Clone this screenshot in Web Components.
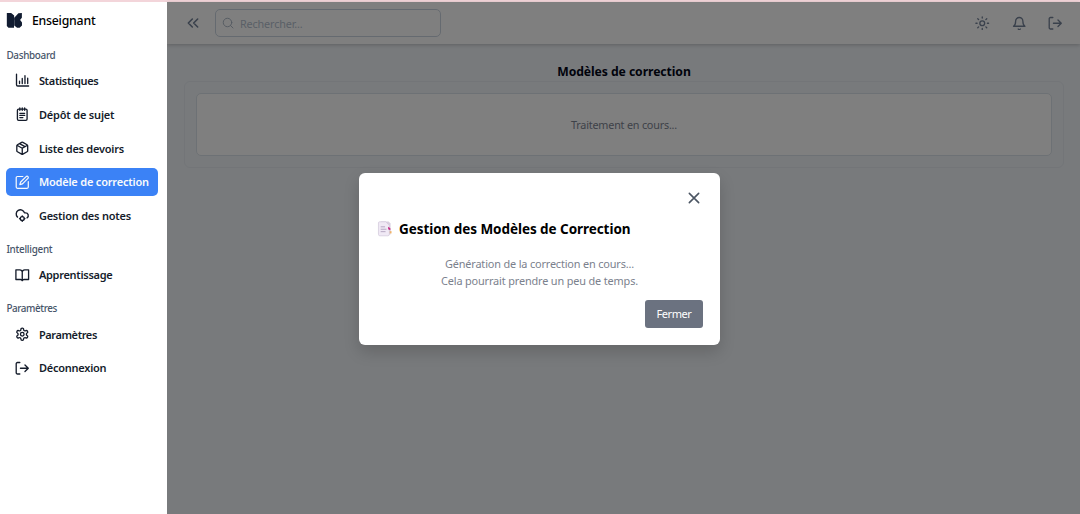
<!DOCTYPE html>
<html lang="fr">
<head>
<meta charset="utf-8">
<title>Enseignant</title>
<style>
html,body{margin:0;height:100%;overflow:hidden}
body{font-family:"Noto Sans","Open Sans",sans-serif;color:#0f172a}
</style>
</head>
<body>
<teacher-app></teacher-app>
<script>
const svg = (body, w = 1.8) => `<svg viewBox="0 0 24 24" fill="none" stroke="currentColor" stroke-width="${w}" stroke-linecap="round" stroke-linejoin="round">${body}</svg>`;
const ICONS = {
  chart: svg('<path d="M2.500 2v17.500a2 2 0 0 0 2 2h18M7.500 17.500v-4M12 17.500V9M16.500 17.500V4.500M21 17.500v-9"/>', 2.200),
  notes: svg('<rect x="4" y="3.500" width="16" height="18.500" rx="2"/><path d="M8 1.500v4M12 1.500v4M16 1.500v4M8 10.500h8M8 14h8M8 17.500h5"/>', 2.200),
  box: svg('<path d="M21 8a2 2 0 0 0-1-1.730l-7-4a2 2 0 0 0-2 0l-7 4A2 2 0 0 0 3 8v8a2 2 0 0 0 1 1.730l7 4a2 2 0 0 0 2 0l7-4A2 2 0 0 0 21 16ZM3.300 7 12 12l8.700-5M12 22V12M7.500 4.300l9 5.100"/>', 2.200),
  edit: svg('<path d="M13 2.500H4a2 2 0 0 0-2 2V20a2 2 0 0 0 2 2h16a2 2 0 0 0 2-2v-9M18.400 2.600a2.100 2.100 0 0 1 3 3L12.400 14.600 8 16l1.400-4.400Z"/>', 2),
  cloud: svg('<circle cx="12" cy="17.500" r="3.300"/><path d="M4.200 15.100A7 7 0 1 1 15.710 8h1.790a4.500 4.500 0 0 1 2.500 8.240M12 13v1M12 21v1M16.500 17.500h-1M8.500 17.500h-1"/>', 2.300),
  book: svg('<path d="M12 6.500a4 4 0 0 0-4-3.500H1.500v16H9a3 3 0 0 1 3 2 3 3 0 0 1 3-2h7.500V3H16a4 4 0 0 0-4 3.500ZM12 6.500V21"/>', 2.200),
  gear: svg('<path d="M12.220 2h-.44a2 2 0 0 0-2 2v.18a2 2 0 0 1-1 1.730l-.43.25a2 2 0 0 1-2 0l-.15-.08a2 2 0 0 0-2.730.73l-.22.38a2 2 0 0 0 .73 2.730l.15.1a2 2 0 0 1 1 1.720v.51a2 2 0 0 1-1 1.740l-.15.09a2 2 0 0 0-.73 2.730l.22.38a2 2 0 0 0 2.730.73l.15-.08a2 2 0 0 1 2 0l.43.25a2 2 0 0 1 1 1.730V20a2 2 0 0 0 2 2h.44a2 2 0 0 0 2-2v-.18a2 2 0 0 1 1-1.730l.43-.25a2 2 0 0 1 2 0l.15.08a2 2 0 0 0 2.730-.73l.22-.39a2 2 0 0 0-.73-2.730l-.15-.08a2 2 0 0 1-1-1.740v-.5a2 2 0 0 1 1-1.740l.15-.09a2 2 0 0 0 .73-2.730l-.22-.38a2 2 0 0 0-2.730-.73l-.15.08a2 2 0 0 1-2 0l-.43-.25a2 2 0 0 1-1-1.730V4a2 2 0 0 0-2-2z"/><circle cx="12" cy="12" r="3"/>', 2.200),
  exit: svg('<path d="M8 21.500H4a2 2 0 0 1-2-2v-15a2 2 0 0 1 2-2h4M9 12h13M16.500 6.500 22 12l-5.500 5.500"/>', 2.200),
  collapse: svg('<path d="m11 18-6-6 6-6M19 18l-6-6 6-6"/>', 2.400),
  search: svg('<circle cx="11" cy="11" r="8.500"/><path d="m22 22-5-5"/>', 1.800),
  sun: svg('<circle cx="12" cy="12" r="4"/><path d="M12 1.500v2M12 20.500v2M4.600 4.600 6 6M18 18l1.400 1.400M1.500 12h2M20.500 12h2M6 18l-1.400 1.400M19.400 4.600 18 6"/>', 2.200),
  bell: svg('<path d="M6 8.500a6 6 0 0 1 12 0c0 6.500 3.500 8.500 3.500 8.500h-19S6 15 6 8.500M10.300 21.500a2 2 0 0 0 3.400 0"/>', 2.200),
  close: svg('<path d="M4 4l16 16M20 4 4 20"/>', 2.700),
  logo: '<svg viewBox="0 0 16 16" fill="#111c31"><path d="M.8 1h4.200l2.900 2.500v4.500H.8ZM8 8V5.500L12 1.200 15.400 1v4.600l-2 2.400ZM.8 8.100h7v7.100H2.400L.8 13.600ZM8 8.100h6l1.500 2V13l-2.300 2.300h-2.500L8 13Z"/></svg>',
  pages: '<svg viewBox="0 0 16 16"><path d="M4 .5h8l2 2V14H4z" fill="#d8cfdf"/><path d="M1.500 2q0-1.200 1.200-1.200H9L12.800 4.500v9q0 1.800-1.500 1.800H3q-1.500 0-1.500-1.500z" fill="#f0e9f5" stroke="#cfc5d8" stroke-width=".7"/><path d="M3.800 6h4.500M3.800 8.500h6M3.800 11h5" stroke="#ae9fbb" stroke-width=".9"/><path d="M11.500 6 13.800 7.500v2L11.500 8.600z" fill="#c62882"/><path d="M13.200 10.500h1.800v2.300h-1.800z" fill="#f0b268"/></svg>'
};

function define(name, render, ready) {
  customElements.define(name, class extends HTMLElement {
    connectedCallback() {
      if (this.shadowRoot) return;
      this.attachShadow({ mode: 'open' }).innerHTML = render(this);
      if (ready) ready(this);
    }
  });
}

define('ui-icon', el => `<style>:host{display:block;flex:none;width:${el.getAttribute('size')}px;height:${el.getAttribute('size')}px}svg{display:block;width:100%;height:100%}</style>${ICONS[el.getAttribute('name')]}`);

/* One line of text whose tracking is adjusted to fill the given measure. */
define('ui-text', () => `<style>:host{display:block;flex:none;white-space:nowrap}span{display:inline-block}</style><span><slot></slot></span>`, el => {
  const span = el.shadowRoot.querySelector('span');
  const target = +el.getAttribute('measure');
  const count = el.textContent.length;
  const gap = (target - span.getBoundingClientRect().width) / count;
  el.style.letterSpacing = gap.toFixed(3) + 'px';
});

define('nav-item', el => `<style>
:host{display:flex;align-items:center;height:28px;box-sizing:border-box;padding-left:9px;gap:9px;border-radius:5px;font-size:11px;font-weight:600;color:#151c2b}
:host([active]){background:#3b82f6;color:#f8fafc}
</style><ui-icon name="${el.getAttribute('icon')}" size="14.500"></ui-icon><ui-text measure="${el.getAttribute('measure')}">${el.getAttribute('label')}</ui-text>`);

define('nav-group', el => `<style>
:host{display:flex;flex-direction:column;gap:5.750px}
ui-text{font-size:9.900px;line-height:14px;font-weight:500;color:#475569;margin-bottom:-1px}
</style><ui-text measure="${el.getAttribute('measure')}">${el.getAttribute('label')}</ui-text><slot></slot>`);

define('side-bar', () => `<style>
:host{display:flex;flex-direction:column;width:167px;box-sizing:border-box;padding:0 8.600px 0 6.400px;background:#fff;position:relative;z-index:1}
.brand{display:flex;align-items:center;height:37px;gap:9px;font-size:12.300px;font-weight:500;color:#000}
nav{display:flex;flex-direction:column;gap:12.500px;padding-top:8.800px}
</style>
<div class="brand"><ui-icon name="logo" size="16.500"></ui-icon><ui-text measure="63.500">Enseignant</ui-text></div>
<nav>
<nav-group label="Dashboard" measure="49">
<nav-item icon="chart" label="Statistiques" measure="59.500"></nav-item>
<nav-item icon="notes" label="Dépôt de sujet" measure="75.500"></nav-item>
<nav-item icon="box" label="Liste des devoirs" measure="85"></nav-item>
<nav-item icon="edit" label="Modèle de correction" measure="110" active></nav-item>
<nav-item icon="cloud" label="Gestion des notes" measure="92"></nav-item>
</nav-group>
<nav-group label="Intelligent" measure="46">
<nav-item icon="book" label="Apprentissage" measure="73.500"></nav-item>
</nav-group>
<nav-group label="Paramètres" measure="50.500">
<nav-item icon="gear" label="Paramètres" measure="58"></nav-item>
<nav-item icon="exit" label="Déconnexion" measure="67.500"></nav-item>
</nav-group>
</nav>`);

define('top-bar', () => `<style>
:host{display:flex;align-items:center;height:42px;box-sizing:border-box;padding:0 17.500px 0 17.500px;background:#fff;color:#748298;box-shadow:0 1px 4px rgba(0,0,0,.22);position:relative}
.search{display:flex;align-items:center;gap:6px;width:226px;height:28px;box-sizing:border-box;margin-left:14.500px;padding-left:6px;border:1px solid #cbd5e1;border-radius:5px;font-size:10.800px;color:#b4bfce}
.search ui-icon{color:#a5b1c1}
.actions{display:flex;gap:22px;margin-left:auto}
</style>
<ui-icon name="collapse" size="16"></ui-icon>
<div class="search"><ui-icon name="search" size="12"></ui-icon><ui-text measure="62.500">Rechercher...</ui-text></div>
<div class="actions"><ui-icon name="sun" size="14.500"></ui-icon><ui-icon name="bell" size="14.500"></ui-icon><ui-icon name="exit" size="14.500"></ui-icon></div>`);

define('correction-panel', () => `<style>
:host{display:flex;flex-direction:column;align-items:center;padding:18px 16px 0 17px}
h1{margin:0 0 -1px;font-size:12.200px;line-height:20px;font-weight:700;color:#020617}
.frame{box-sizing:border-box;width:100%;height:87px;padding:11px;border:1px solid #e6ebf1;border-radius:6px}
.box{display:flex;align-items:center;justify-content:center;height:100%;box-sizing:border-box;background:#fff;border:1px solid #dbe2ea;border-radius:5px;font-size:10.800px;color:#7c8492}
</style>
<h1><ui-text measure="133.500">Modèles de correction</ui-text></h1>
<div class="frame"><div class="box"><ui-text measure="106">Traitement en cours...</ui-text></div></div>`);

define('modal-card', () => `<style>
:host{display:flex;flex-direction:column;width:361px;height:172px;box-sizing:border-box;padding:17px 17px;background:#fff;border-radius:6px;box-shadow:0 7px 16px rgba(0,0,0,.16)}
.close{display:flex;justify-content:flex-end;padding:1px 2px 0 0;color:#4b5563}
h2{display:flex;align-items:center;gap:6.500px;margin:13px 0 0 1px;height:22px;font-size:13.500px;font-weight:700;color:#000}
.body{display:flex;flex-direction:column;align-items:center;margin-top:15px;font-size:10.900px;line-height:17px;color:#7b818d}
button{align-self:flex-end;display:flex;align-items:center;justify-content:center;width:58px;height:28px;margin-top:11px;padding:0 0 1px;border:0;border-radius:3px;background:#6b7280;color:#fff;font:400 11px "Noto Sans",sans-serif;box-sizing:border-box}
</style>
<div class="close"><ui-icon name="close" size="14"></ui-icon></div>
<h2><ui-icon name="pages" size="15.500"></ui-icon><ui-text measure="231.500">Gestion des Modèles de Correction</ui-text></h2>
<div class="body"><ui-text measure="189">Génération de la correction en cours...</ui-text><ui-text measure="197">Cela pourrait prendre un peu de temps.</ui-text></div>
<button><ui-text measure="35">Fermer</ui-text></button>`);

define('teacher-app', () => `<style>
:host{display:flex;height:514px;width:1080px;box-sizing:border-box;border-top:2px solid #f3d5da;background:#f1f5f9;position:relative}
main{flex:1;min-width:0}
.shade{position:absolute;inset:0 0 0 167px;background:rgba(0,0,0,.5)}
modal-card{position:absolute;left:359px;top:171px}
</style>
<side-bar></side-bar><main><top-bar></top-bar><correction-panel></correction-panel></main>
<div class="shade"></div><modal-card></modal-card>`);
</script>
</body>
</html>
